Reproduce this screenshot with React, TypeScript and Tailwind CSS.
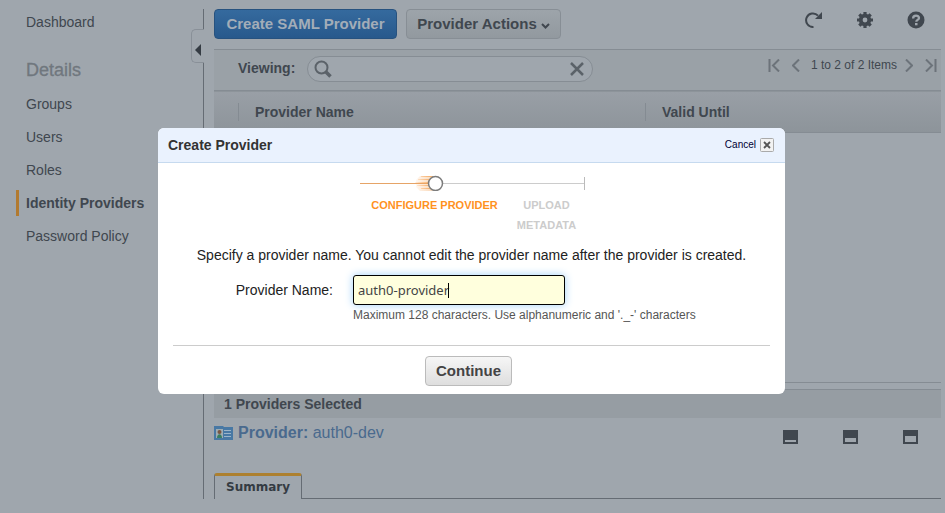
import type { ReactNode } from "react";

const details = ["Groups", "Users", "Roles", "Identity Providers", "Password Policy"];

function Chevrons({ d, label, width }: { d: string; label: string; width: number }) {
  return (
    <button type="button" aria-label={label} className="text-[#6c737a]">
      <svg width={width} height="13" viewBox={`0 0 ${width} 13`} fill="none" stroke="currentColor" strokeWidth="2">
        <path d={d} />
      </svg>
    </button>
  );
}

function IconButton({ label, children }: { label: string; children: ReactNode }) {
  return (
    <button type="button" aria-label={label} className="text-[#40474f]">
      <svg width="18" height="18" viewBox="0 0 18 18" fill="currentColor">
        {children}
      </svg>
    </button>
  );
}

function PaneButton({ label, top }: { label: string; top: number }) {
  return (
    <button type="button" aria-label={label}>
      <svg width="15" height="14" viewBox="0 0 15 14">
        <rect width="15" height="14" fill="#40474f" />
        <rect x="2" y={top} width="11" height={12 - top} fill="#9fa6ad" />
      </svg>
    </button>
  );
}

function Sidebar() {
  return (
    <nav className="relative mt-[9px] h-[490px] w-[204px] shrink-0 border-r border-[#656c74] text-sm leading-[26px] text-[#40474f]">
      <a href="#dashboard" className="block pl-[26px]">Dashboard</a>
      <h2 className="mt-[22px] mb-2 pl-[26px] text-lg leading-[26px] text-[#70777e] [-webkit-text-stroke:0.3px]">Details</h2>
      <ul className="flex flex-col gap-[7px]">
        {details.map((name) => (
          <li key={name} className="pl-4">
            <a
              href="#details"
              className={
                name === "Identity Providers"
                  ? "block border-l-[3px] border-[#b27a30] pl-[7px] font-bold"
                  : "block pl-[10px]"
              }
            >
              {name}
            </a>
          </li>
        ))}
      </ul>
      <button
        type="button"
        aria-label="Collapse sidebar"
        className="absolute top-5 -right-px flex h-[34px] w-[13px] items-center justify-end rounded-l-[5px] border border-r-0 border-[#899098] bg-[#9fa6ad] pr-[3px]"
      >
        <svg width="6" height="12" viewBox="0 0 6 12" className="mt-2">
          <path d="M6 0v12L0 6z" fill="#353c44" />
        </svg>
      </button>
    </nav>
  );
}

function Toolbar() {
  return (
    <div className="flex items-start gap-[9px]">
      <button
        type="button"
        className="h-[30px] w-[183px] rounded border border-[#27527f] bg-linear-to-b from-[#356a9e] to-[#28598c] text-[15px] leading-7 font-bold whitespace-nowrap text-[#a3adb8]"
      >
        Create SAML Provider
      </button>
      <button
        type="button"
        className="flex h-[30px] w-[155px] items-center justify-center gap-1 rounded border border-[#878e95] bg-linear-to-b from-[#9da4aa] to-[#92999f] text-[15px] font-bold whitespace-nowrap text-[#40474f]"
      >
        Provider Actions
        <svg width="9" height="6" viewBox="0 0 9 6" fill="none" stroke="currentColor" strokeWidth="2" className="mt-[3px] shrink-0">
          <path d="M1 1l3.500 3.500L8 1" />
        </svg>
      </button>
      <div className="mt-0.5 mr-4 ml-auto flex gap-[33px]">
        <IconButton label="Refresh">
          <path d="M8.500 16A6.800 6.800 0 1 1 13 4.700" fill="none" stroke="currentColor" strokeWidth="2" />
          <path d="M17 1v7h-7z" />
        </IconButton>
        <IconButton label="Settings">
          <path fillRule="evenodd" d="M7.400 1h3.200v2l1.500.6 1.500-1.400 2.200 2.200-1.400 1.500.6 1.500h2v3.200h-2l-.6 1.500 1.400 1.500-2.200 2.200-1.500-1.400-1.500.6v2H7.400v-2l-1.500-.6-1.500 1.400-2.200-2.200 1.400-1.500-.6-1.500H1V7.400h2l.6-1.500-1.400-1.500 2.200-2.200 1.500 1.400 1.500-.6zM9 6.600a2.400 2.400 0 1 0 0 4.800 2.400 2.400 0 0 0 0-4.800z" />
        </IconButton>
        <IconButton label="Help">
          <circle cx="9" cy="9" r="8.500" />
          <path d="M6.100 7.400C6.100 3.700 12 3.900 12 7c0 1.900-2.700 1.900-2.700 3.700" fill="none" stroke="#9fa6ad" strokeWidth="2.300" />
          <rect x="8" y="12" width="2.500" height="2.300" fill="#9fa6ad" />
        </IconButton>
      </div>
    </div>
  );
}

function ProviderList() {
  return (
    <section className="mt-2.5 border-t border-[#858c93] border-b">
      <div className="flex h-10 items-start bg-[#9aa1a7] pl-6">
        <label htmlFor="viewing" className="mt-2 text-sm leading-5 font-bold text-[#40474f]">Viewing:</label>
        <div className="mt-1.5 ml-3 flex h-[26px] w-[286px] items-center rounded-full border border-[#868d94] bg-[#9fa6ad] pr-2 pl-1.5">
          <svg width="18" height="18" viewBox="0 0 18 18" fill="none" stroke="#5b6269" className="shrink-0">
            <circle cx="7.500" cy="7.500" r="6" strokeWidth="2" />
            <path d="M11.500 11.500l5 5" strokeWidth="3.500" />
          </svg>
          <input id="viewing" type="text" className="min-w-0 flex-1 px-1 text-sm outline-none" />
          <button type="button" aria-label="Clear search">
            <svg width="14" height="14" viewBox="0 0 14 14" stroke="#5b6269" strokeWidth="2.500">
              <path d="M1 1l12 12M13 1L1 13" />
            </svg>
          </button>
        </div>
        <div className="mt-[5px] mr-1 ml-auto flex items-center text-xs leading-5 text-[#40474f]">
          <Chevrons label="First page" width={12} d="M1.500 0v13M11 .5l-6 6 6 6" />
          <span className="w-3" />
          <Chevrons label="Previous page" width={8} d="M7 .5l-6 6 6 6" />
          <span className="pr-2 pl-[11px] whitespace-nowrap">1 to 2 of 2 Items</span>
          <Chevrons label="Next page" width={8} d="M1 .5l6 6-6 6" />
          <span className="w-3" />
          <Chevrons label="Last page" width={12} d="M10.500 0v13M1 .5l6 6-6 6" />
        </div>
      </div>
      <table className="w-full table-fixed border-collapse text-left text-sm text-[#40474f]">
        <colgroup>
          <col className="w-6" />
          <col className="w-[407px]" />
          <col />
        </colgroup>
        <thead className="border-y border-[#858c93] bg-linear-to-b from-[#999fa6] to-[#8d949a]">
          <tr className="h-[42px]">
            <td />
            <th scope="col" className="p-0 font-bold">
              <span className="block border-l border-[#848b92] pl-4 leading-[18px]">Provider Name</span>
            </th>
            <th scope="col" className="p-0 font-bold">
              <span className="block border-l border-[#848b92] pl-4 leading-[18px]">Valid Until</span>
            </th>
          </tr>
        </thead>
        <tbody>
          <tr className="h-[249px]">
            <td colSpan={3} />
          </tr>
        </tbody>
      </table>
    </section>
  );
}

function Selection() {
  return (
    <section className="mt-1.5 border-t border-[#858c93]">
      <h2 className="bg-[#969da3] pl-[10px] text-sm leading-7 font-bold text-[#40474f]">1 Providers Selected</h2>
      <div className="flex h-[30px] items-center text-base text-[#4a6a8e]">
        <svg width="19" height="14" viewBox="0 0 19 14" className="mr-[5px]">
          <path d="M0 0h9l1 1h9v13H0z" fill="#4878a4" />
          <rect x="2" y="3" width="7" height="9" fill="#9eacb2" />
          <circle cx="5.500" cy="6" r="2" fill="#785743" />
          <path d="M3 12c0-5 5-5 5 0z" fill="#397e62" />
          <path d="M10 4.500h7M10 7.500h7M10 10.500h7" stroke="#9bb4c9" />
        </svg>
        <p><b>Provider:</b> auth0-dev</p>
        <div className="mt-[9px] mr-[23px] ml-auto flex gap-[45px]">
          <PaneButton label="Small pane" top={10} />
          <PaneButton label="Medium pane" top={8} />
          <PaneButton label="Large pane" top={6} />
        </div>
      </div>
      <div className="mt-[25px] flex" role="tablist">
        <button
          type="button"
          role="tab"
          aria-selected="true"
          className="h-[26px] w-[88px] rounded-t-[3px] border-x border-t-[3px] border-x-[#656c74] border-t-[#ad802f] font-['DejaVu_Sans',sans-serif] text-xs font-bold text-[#343b43]"
        >
          Summary
        </button>
        <div className="flex-1 border-b border-[#656c74]" />
      </div>
    </section>
  );
}

function Wizard() {
  return (
    <div className="mx-auto w-56">
      <svg width="238" height="16" viewBox="0 0 238 16" fill="none" className="block">
        <defs>
          <linearGradient id="trail" x1="54" x2="72" y1="0" y2="0" gradientUnits="userSpaceOnUse">
            <stop stopColor="#ff9a3c" stopOpacity="0.05" />
            <stop offset="1" stopColor="#f0a862" stopOpacity="0.85" />
          </linearGradient>
        </defs>
        <path d="M0 8.500h68" stroke="#e6a467" />
        <path d="M83 8.500h141" stroke="#ccc" />
        <path d="M224.500 2v13" stroke="#bbb" />
        <path d="M60 1h14v15H60l-4-4V5z" fill="url(#trail)" opacity=".5" />
        <path d="M61 1.500h12M58 4.500h12M55 7.500h13M57 10.500h12M61 13.500h11" stroke="url(#trail)" />
        <circle cx="75.500" cy="8.500" r="7" fill="#fff" stroke="#7c7c7c" strokeWidth="1.500" />
      </svg>
      <ol className="mt-1 flex justify-center text-center text-[11px] leading-5 font-bold uppercase">
        <li className="w-[150px] whitespace-nowrap text-[#ff921f]" aria-current="step">Configure Provider</li>
        <li className="w-[74px] text-[#ccc]">Upload Metadata</li>
      </ol>
    </div>
  );
}

function Dialog() {
  return (
    <div className="fixed inset-0 flex items-start justify-center pt-32 pr-0.5">
      <form
        role="dialog"
        aria-label="Create Provider"
        className="w-[627px] max-w-full overflow-hidden rounded-md bg-white text-sm text-[#222]"
        onSubmit={(event) => event.preventDefault()}
      >
        <header className="flex h-[35px] items-center justify-between border-b border-[#c6daef] bg-[#eaf2fe] pr-[11px] pl-[10px]">
          <h1 className="font-bold text-[#333]">Create Provider</h1>
          <button type="button" className="flex items-center gap-1 text-[10px] text-[#000033]">
            Cancel
            <svg width="14" height="14" viewBox="0 0 14 14" fill="none">
              <rect x=".5" y=".5" width="13" height="13" rx="1" fill="#f2f2f2" stroke="#aaa" />
              <path d="M4 4l6 6M10 4l-6 6" stroke="#555" strokeWidth="1.800" />
            </svg>
          </button>
        </header>
        <div className="px-[15px] pt-3 pb-2">
          <Wizard />
          <p className="mt-2.5 text-center leading-5">
            Specify a provider name. You cannot edit the provider name after the provider is created.
          </p>
          <div className="mt-[10px] flex">
            <label htmlFor="provider-name" className="w-40 text-right leading-[30px]">Provider Name:</label>
            <div className="ml-5">
              <div className="relative">
                <input
                  id="provider-name"
                  type="text"
                  defaultValue="auth0-provider"
                  className="block h-[30px] w-[212px] rounded-[3px] border border-black bg-[#ffffdd] px-1 font-['Noto_Sans',sans-serif] text-[13px] text-[#444] shadow-[0_0_8px_#9fd0f8] outline-none"
                />
                <span className="absolute top-2 left-[95px] h-[15px] w-px bg-black" />
              </div>
              <p className="text-xs leading-5 text-[#555]">
                Maximum 128 characters. Use alphanumeric and '._-' characters
              </p>
            </div>
          </div>
          <div className="mt-5 border-t border-[#ccc] pt-2.5 pr-1.5 text-center">
            <button
              type="submit"
              className="h-[30px] w-[87px] rounded border border-[#bbb] bg-linear-to-b from-[#f6f6f6] to-[#dedede] text-[15px] font-bold text-[#444]"
            >
              Continue
            </button>
          </div>
        </div>
      </form>
    </div>
  );
}

export default function App() {
  return (
    <div className="flex min-h-screen bg-[#9fa6ad] font-['Liberation_Sans',Arial,sans-serif]">
      <Sidebar />
      <main className="min-w-0 flex-1 pt-[9px] pr-1 pl-2.5">
        <Toolbar />
        <ProviderList />
        <Selection />
      </main>
      <Dialog />
    </div>
  );
}
